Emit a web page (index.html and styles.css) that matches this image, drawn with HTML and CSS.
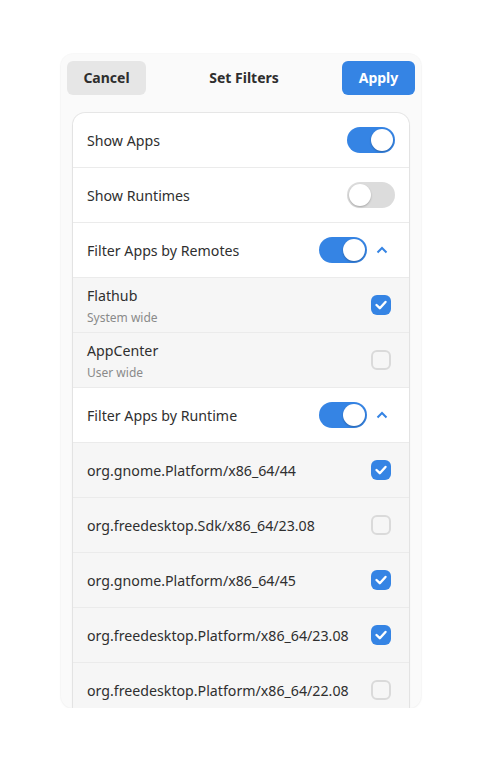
FILE: index.html
```html
<!DOCTYPE html>
<html>
<head>
<meta charset="utf-8">
<link rel="stylesheet" href="styles.css">
</head>
<body>
<div class="window">
  <header class="headerbar">
    <button class="btn btn-cancel">Cancel</button>
    <div class="title">Set Filters</div>
    <button class="btn btn-apply">Apply</button>
  </header>
  <div class="content">
    <div class="list">
      <div class="row">
        <span class="label">Show Apps</span>
        <span class="switch on"><span class="knob"></span></span>
      </div>
      <div class="row">
        <span class="label">Show Runtimes</span>
        <span class="switch"><span class="knob"></span></span>
      </div>
      <div class="row">
        <span class="label">Filter Apps by Remotes</span>
        <span class="switch on"><span class="knob"></span></span>
        <span class="chev"><svg width="12" height="8" viewBox="0 0 12 8"><polyline points="1.5,6.5 6,2 10.5,6.5" fill="none" stroke="#3584e4" stroke-width="2"/></svg></span>
      </div>
      <div class="row sub">
        <span class="label two"><span>Flathub</span><span class="subtitle">System wide</span></span>
        <span class="check on"><svg width="20" height="20" viewBox="0 0 20 20"><polyline points="5.5,10 8.8,13.2 14.5,7" fill="none" stroke="#fff" stroke-width="2.4" stroke-linecap="round" stroke-linejoin="round"/></svg></span>
      </div>
      <div class="row sub">
        <span class="label two"><span>AppCenter</span><span class="subtitle">User wide</span></span>
        <span class="check"></span>
      </div>
      <div class="row">
        <span class="label">Filter Apps by Runtime</span>
        <span class="switch on"><span class="knob"></span></span>
        <span class="chev"><svg width="12" height="8" viewBox="0 0 12 8"><polyline points="1.5,6.5 6,2 10.5,6.5" fill="none" stroke="#3584e4" stroke-width="2"/></svg></span>
      </div>
      <div class="row sub">
        <span class="label">org.gnome.Platform/x86_64/44</span>
        <span class="check on"><svg width="20" height="20" viewBox="0 0 20 20"><polyline points="5.5,10 8.8,13.2 14.5,7" fill="none" stroke="#fff" stroke-width="2.4" stroke-linecap="round" stroke-linejoin="round"/></svg></span>
      </div>
      <div class="row sub">
        <span class="label">org.freedesktop.Sdk/x86_64/23.08</span>
        <span class="check"></span>
      </div>
      <div class="row sub">
        <span class="label">org.gnome.Platform/x86_64/45</span>
        <span class="check on"><svg width="20" height="20" viewBox="0 0 20 20"><polyline points="5.5,10 8.8,13.2 14.5,7" fill="none" stroke="#fff" stroke-width="2.4" stroke-linecap="round" stroke-linejoin="round"/></svg></span>
      </div>
      <div class="row sub">
        <span class="label">org.freedesktop.Platform/x86_64/23.08</span>
        <span class="check on"><svg width="20" height="20" viewBox="0 0 20 20"><polyline points="5.5,10 8.8,13.2 14.5,7" fill="none" stroke="#fff" stroke-width="2.4" stroke-linecap="round" stroke-linejoin="round"/></svg></span>
      </div>
      <div class="row sub">
        <span class="label">org.freedesktop.Platform/x86_64/22.08</span>
        <span class="check"></span>
      </div>
    </div>
  </div>
</div>
</body>
</html>
```
FILE: styles.css
```css
html, body {
  margin: 0;
  padding: 0;
  background: #ffffff;
}
body {
  font-family: "Noto Sans", "Open Sans", sans-serif;
  color: #2f2f2f;
  padding: 54px 0 0 61px;
}
.window {
  width: 360px;
  height: 654px;
  background: #fafafa;
  border-radius: 12px;
  overflow: hidden;
  display: flex;
  flex-direction: column;
  box-shadow: 0 0 0 1px rgba(0,0,0,0.025), 0 1px 3px rgba(0,0,0,0.04);
}
.headerbar {
  height: 47px;
  flex: none;
  display: flex;
  align-items: center;
  justify-content: space-between;
  padding: 0 6px;
  box-sizing: border-box;
}
.btn {
  height: 34px;
  border: none;
  border-radius: 6px;
  font-family: inherit;
  font-size: 14px;
  font-weight: 700;
  padding: 0 12px;
}
.btn-cancel {
  background: #e6e6e6;
  color: #2e2e2e;
  width: 79px;
}
.btn-apply {
  background: #3584e4;
  color: #ffffff;
  width: 73px;
}
.title {
  font-size: 14px;
  font-weight: 700;
  color: #2e2e2e;
}
.content {
  flex: 1;
  padding: 12px 12px 0 12px;
  overflow: hidden;
}
.list {
  background: #ffffff;
  border-radius: 12px 12px 0 0;
  box-shadow: 0 0 0 1px rgba(0,0,0,0.07), 0 1px 3px rgba(0,0,0,0.06);
}
.row {
  height: 54px;
  display: flex;
  align-items: center;
  padding: 0 14px;
  border-bottom: 1px solid #ebebeb;
  font-size: 14.2px;
}
.row.sub {
  background: #f6f6f6;
}
.label {
  flex: 1;
  white-space: nowrap;
}
.label.two {
  display: flex;
  flex-direction: column;
  line-height: 20px;
  padding-top: 3px;
}
.subtitle {
  font-size: 12px;
  color: #8a8a8a;
  line-height: 18px;
  margin-top: 3px;
}
.switch {
  width: 48px;
  height: 26px;
  border-radius: 13px;
  background: #dcdcdc;
  position: relative;
  flex: none;
}
.switch.on {
  background: #3584e4;
}
.knob {
  position: absolute;
  top: 2px;
  left: 2px;
  width: 22px;
  height: 22px;
  border-radius: 50%;
  background: #ffffff;
  box-shadow: 0 1px 2px rgba(0,0,0,0.25);
}
.switch.on .knob {
  left: 24px;
}
.chev {
  width: 26px;
  margin-left: 2px;
  display: flex;
  justify-content: center;
  align-items: center;
  flex: none;
}
.check {
  width: 20px;
  height: 20px;
  box-sizing: border-box;
  border-radius: 6px;
  border: 2px solid #dadada;
  margin-right: 4px;
  flex: none;
}
.check.on {
  background: #3584e4;
  border: none;
}
.check svg {
  display: block;
}
```
